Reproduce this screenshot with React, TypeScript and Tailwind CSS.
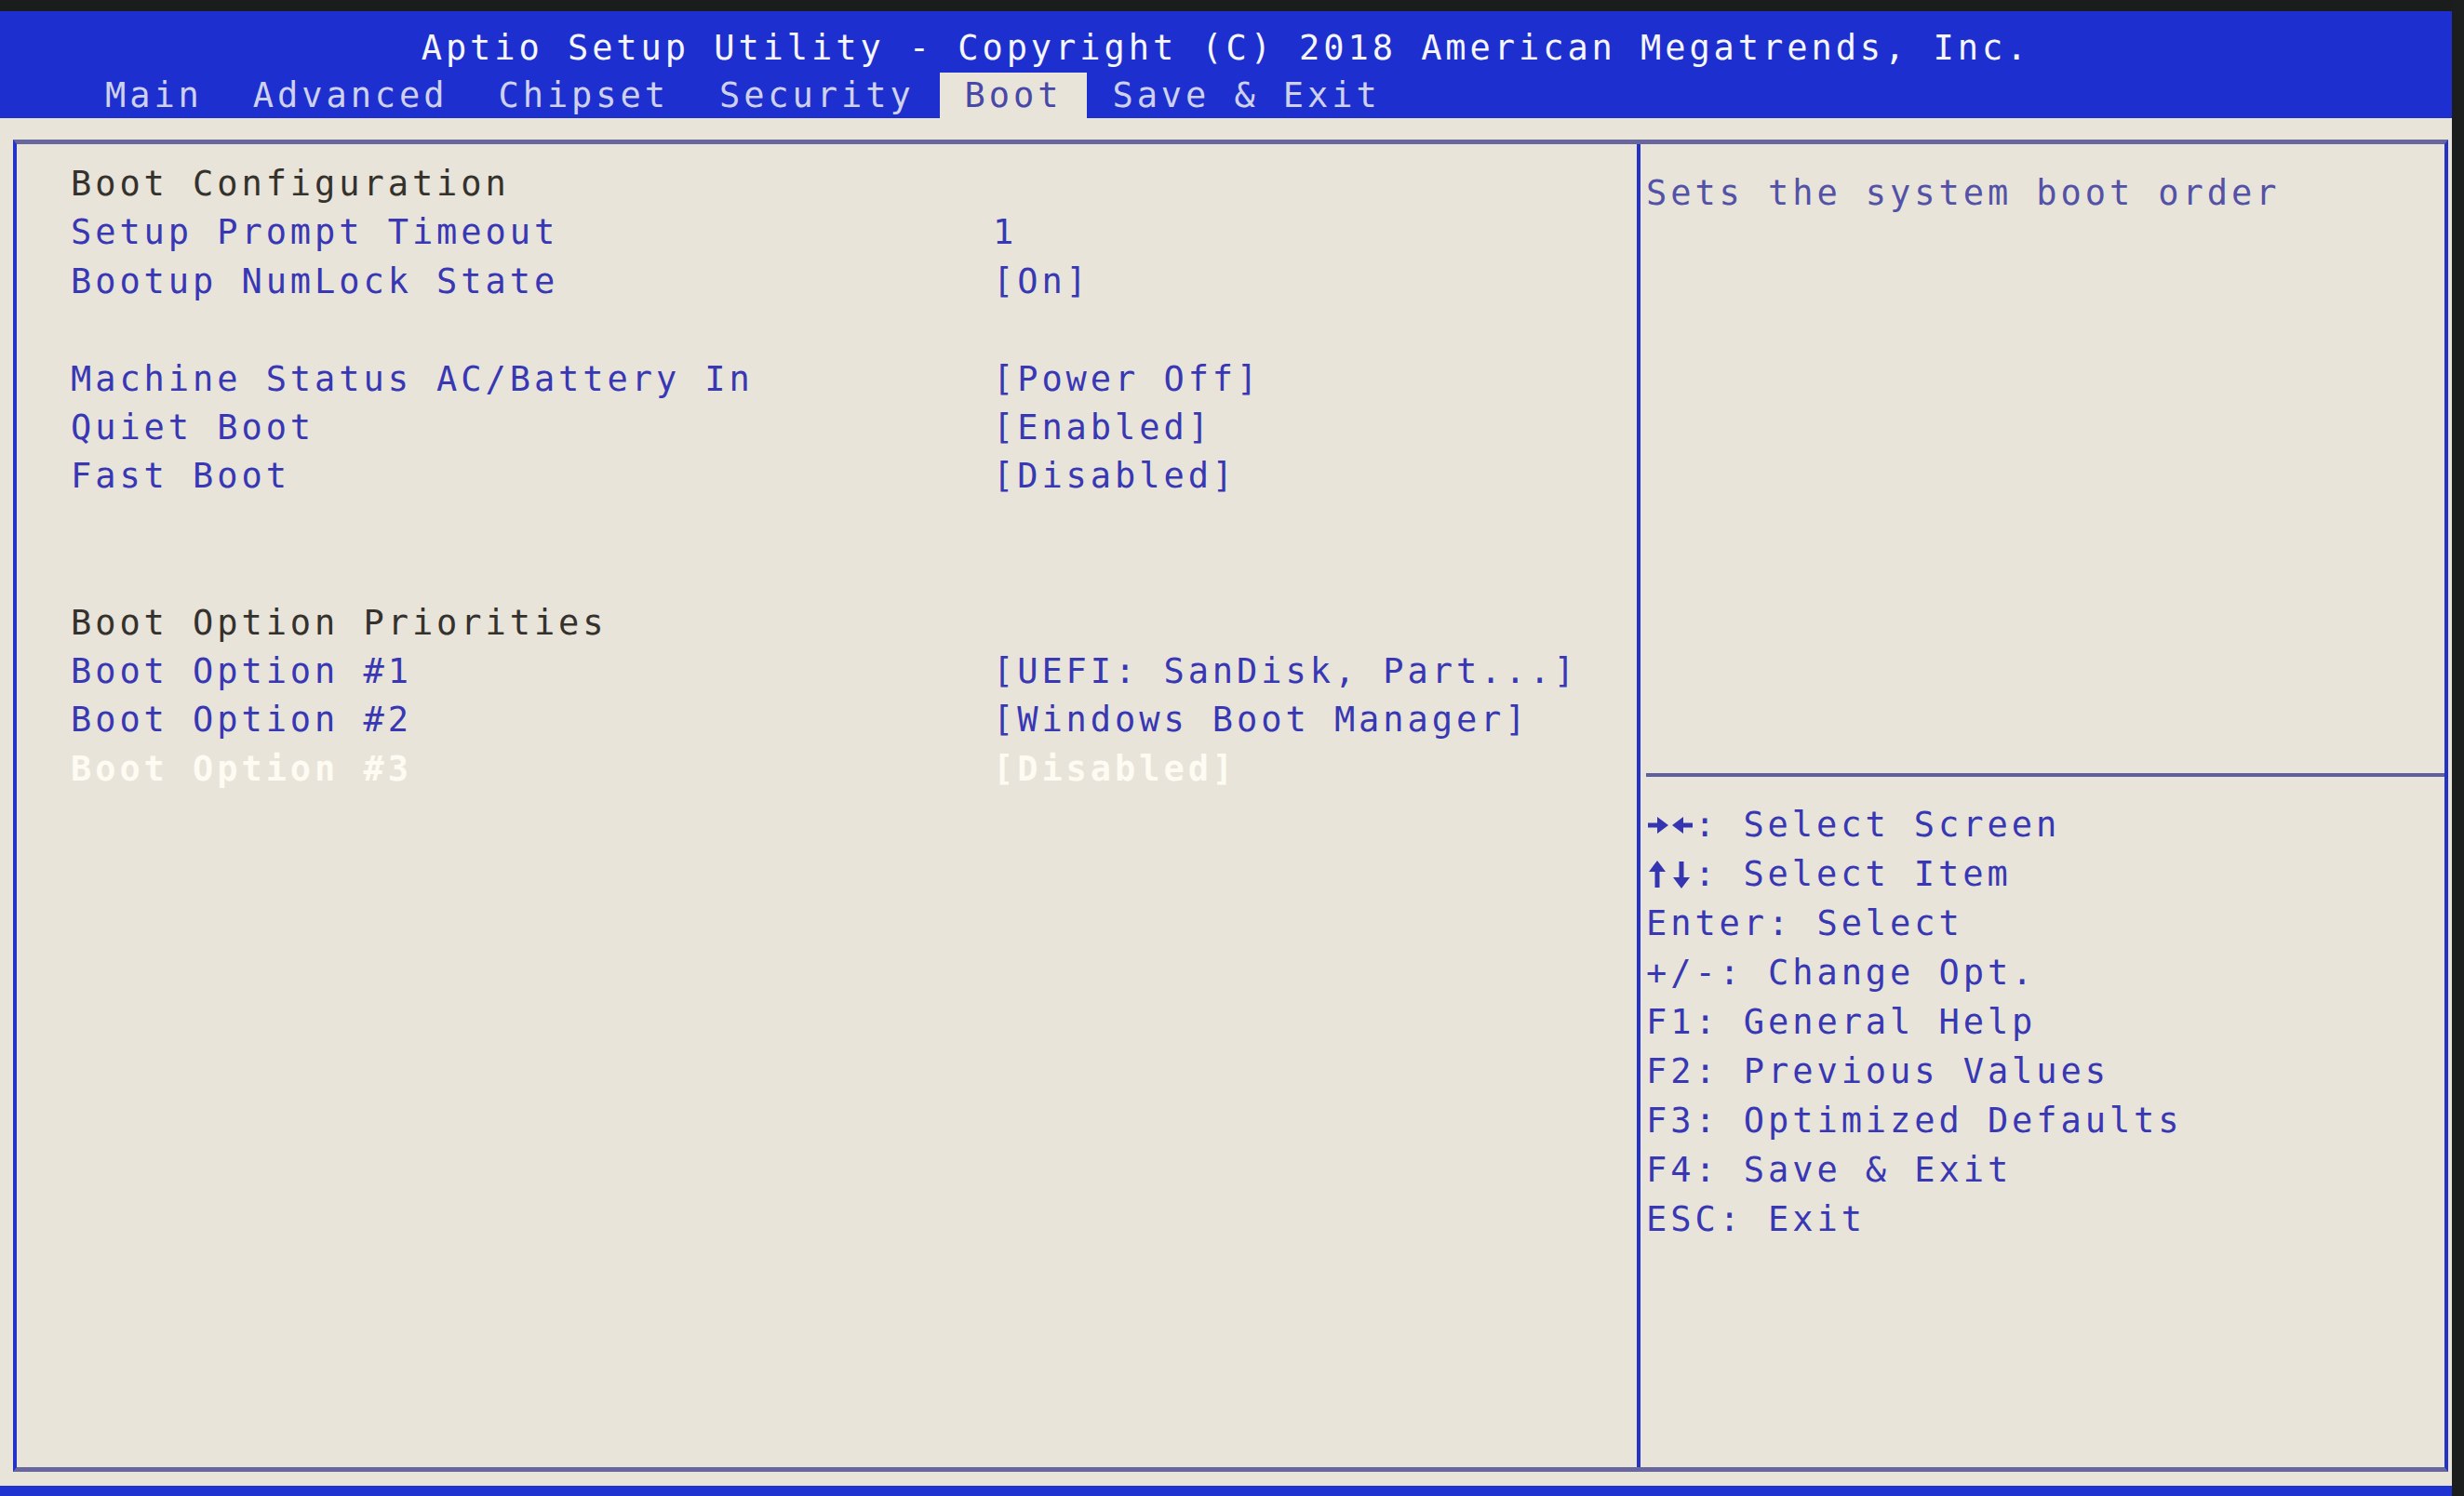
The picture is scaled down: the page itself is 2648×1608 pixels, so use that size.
import React from "react"

const tabs = ["Main", "Advanced", "Chipset", "Security", "Boot", "Save & Exit"]

type Row = { label?: string; value?: string; kind?: "head" | "item" | "sel" }

const rows: Row[] = [
    { label: "Boot Configuration", kind: "head" },
    { label: "Setup Prompt Timeout", value: "1", kind: "item" },
    { label: "Bootup NumLock State", value: "[On]", kind: "item" },
    {},
    { label: "Machine Status AC/Battery In", value: "[Power Off]", kind: "item" },
    { label: "Quiet Boot", value: "[Enabled]", kind: "item" },
    { label: "Fast Boot", value: "[Disabled]", kind: "item" },
    {},
    {},
    { label: "Boot Option Priorities", kind: "head" },
    { label: "Boot Option #1", value: "[UEFI: SanDisk, Part...]", kind: "item" },
    { label: "Boot Option #2", value: "[Windows Boot Manager]", kind: "item" },
    { label: "Boot Option #3", value: "[Disabled]", kind: "sel" },
]

const help: [("lr" | "ud" | ""), string][] = [
    ["lr", ": Select Screen"],
    ["ud", ": Select Item"],
    ["", "Enter: Select"],
    ["", "+/-: Change Opt."],
    ["", "F1: General Help"],
    ["", "F2: Previous Values"],
    ["", "F3: Optimized Defaults"],
    ["", "F4: Save & Exit"],
    ["", "ESC: Exit"],
]

function Arrows({ kind }: { kind: "lr" | "ud" }) {
    if (kind === "lr") {
        return (
            <svg width="52" height="32" viewBox="0 0 52 32" className="inline-block align-[-4px]" fill="#3535b2">
                <rect x="2" y="13.5" width="14" height="5" />
                <polygon points="12,7 24,16 12,25" />
                <polygon points="40,7 28,16 40,25" />
                <rect x="36" y="13.5" width="14" height="5" />
            </svg>
        )
    }
    return (
        <svg width="52" height="32" viewBox="0 0 52 32" className="inline-block align-[-4px]" fill="#3535b2">
            <polygon points="3,13 12,1 21,13" />
            <rect x="9.5" y="10" width="5" height="20" />
            <rect x="35.5" y="2" width="5" height="20" />
            <polygon points="29,19 38,31 47,19" />
        </svg>
    )
}

function rowColor(kind?: Row["kind"]) {
    if (kind === "head") return "text-[#35312c]"
    if (kind === "sel") return "text-[#fdfbf2] font-bold"
    return "text-[#3837b4]"
}

export default function App() {
    return (
        <div className="w-[2648px] h-[1608px] overflow-hidden flex flex-col bg-[#e8e4da] border-r-[13px] border-r-[#1b1e1d] font-['DejaVu_Sans_Mono','Liberation_Mono',monospace] text-[37px] tracking-[3.93px] whitespace-pre">
            <div className="h-[12px] bg-[#1a1d1c]" />

            {/* header */}
            <div className="h-[115px] bg-[#1d30cf] flex flex-col">
                <div className="h-[66px] pt-[14px] leading-[52px] text-center text-[#f6f6fa]">
                    Aptio Setup Utility - Copyright (C) 2018 American Megatrends, Inc.
                </div>
                <div className="h-[49px] flex pl-[86px]">
                    {tabs.map((t) =>
                        t === "Boot" ? (
                            <span key={t} className="h-[49px] leading-[49px] px-[27px] bg-[#e8e4da] text-[#4848a8]">
                                {t}
                            </span>
                        ) : (
                            <span key={t} className="h-[49px] leading-[49px] px-[27px] text-[#cfd0ea]">
                                {t}
                            </span>
                        )
                    )}
                </div>
            </div>

            {/* body */}
            <div className="flex-1 flex flex-col pt-[23px] pl-[14px] pr-[4px] pb-[15px]">
                <div className="flex-1 flex border-y-[5px] border-y-[#67679d] border-x-[4px] border-x-[#2333c9]">
                    <div className="w-[1745px] pt-[17px] pl-[58px] border-r-[4px] border-r-[#2333c9]">
                        {rows.map((r, i) => (
                            <div key={i} className={"h-[52.4px] leading-[52.4px] grid grid-cols-[991px_1fr] " + rowColor(r.kind)}>
                                <span>{r.label ?? ""}</span>
                                <span>{r.value ?? ""}</span>
                            </div>
                        ))}
                    </div>

                    <div className="flex-1 flex flex-col pl-[6px]">
                        <div className="h-[676px] pt-[27px] leading-[52px] text-[#5352a6]">Sets the system boot order</div>
                        <div className="h-[4px] bg-[#5e5fa0]" />
                        <div className="pt-[25px] text-[#3837b4]">
                            {help.map(([a, t], i) => (
                                <div key={i} className="h-[53px] leading-[53px]">
                                    {a && <Arrows kind={a} />}
                                    {t}
                                </div>
                            ))}
                        </div>
                    </div>
                </div>
            </div>

            <div className="h-[11px] bg-[#1f33d0]" />
        </div>
    )
}
